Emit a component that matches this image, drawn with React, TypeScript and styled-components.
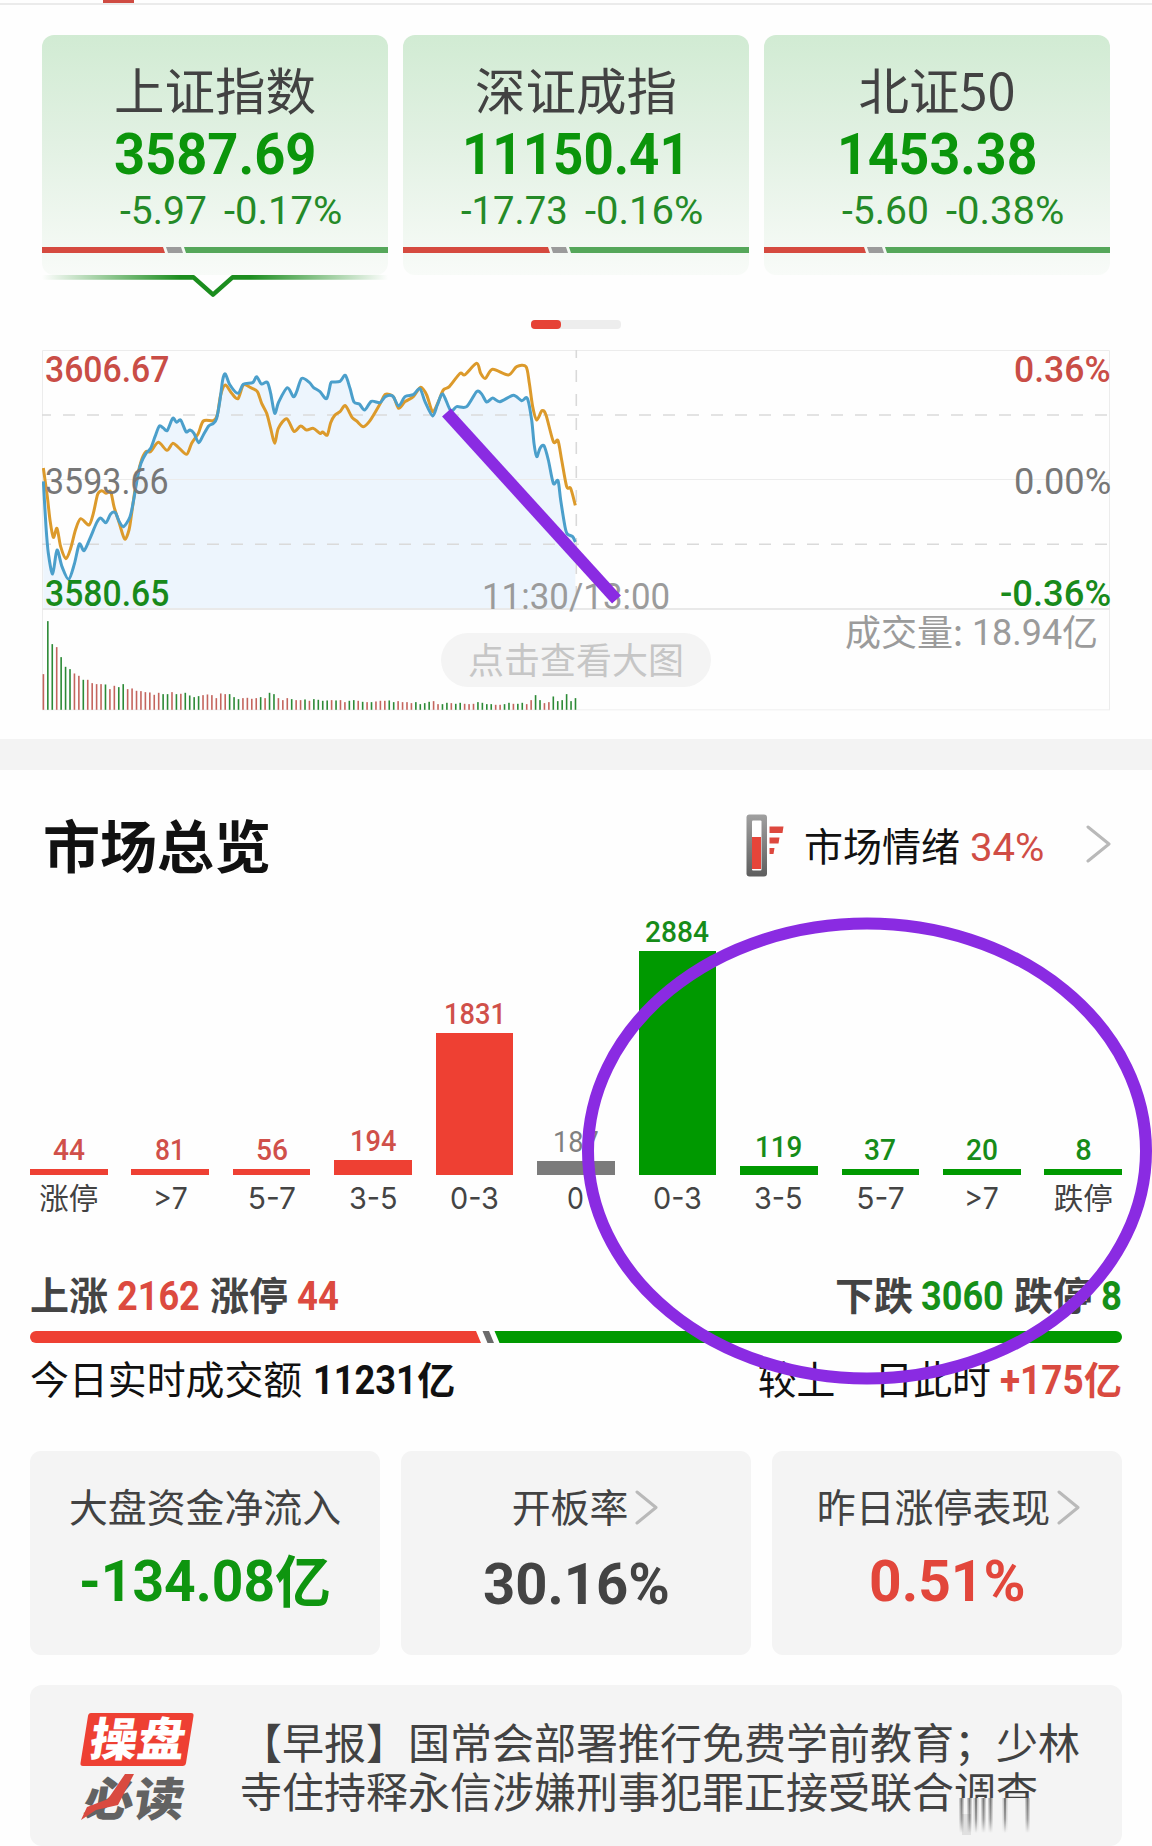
import React, { useLayoutEffect, useRef, useState } from 'react';
import styled, { createGlobalStyle } from 'styled-components';

const CJK = `"Noto Sans CJK SC", sans-serif`;
const DIGIT = `Roboto, "Noto Sans CJK SC", sans-serif`;
const RED = '#ee4033';
const GREEN = '#009900';
const PURPLE = '#8a2be2';

const Global = createGlobalStyle`
  * { box-sizing: border-box; }
  body { margin: 0; background: #fefefe; font-family: ${CJK}; }
`;

/* ---------- text ---------- */

const FitBox = styled.span<{ $w: number; $size: number; $color: string; $weight: number; $font: string }>`
  display: block;
  flex: none;
  width: ${(p) => p.$w}px;
  height: 1em;
  line-height: 1;
  white-space: nowrap;
  font-family: ${(p) => p.$font};
  font-size: ${(p) => p.$size}px;
  font-weight: ${(p) => p.$weight};
  color: ${(p) => p.$color};
`;
const FitInner = styled.span`
  display: inline-block;
  transform-origin: 0 50%;
`;

type FitProps = { w: number; size: number; color: string; weight?: number; font?: string; children: string };

/** Condenses or widens a run of digits to the given width. */
function Fit({ w, size, color, weight = 400, font = DIGIT, children }: FitProps) {
  const ref = useRef<HTMLSpanElement>(null);
  const [k, setK] = useState(1);
  useLayoutEffect(() => {
    if (ref.current && ref.current.offsetWidth) setK(w / ref.current.offsetWidth);
  }, [w, size, children]);
  return (
    <FitBox $w={w} $size={size} $color={color} $weight={weight} $font={font}>
      <FitInner ref={ref} style={{ transform: `scaleX(${k})` }}>{children}</FitInner>
    </FitBox>
  );
}

const Han = styled.span<{ $size: number; $color?: string; $weight?: number }>`
  display: block;
  flex: none;
  height: 1em;
  line-height: 0.89;
  white-space: nowrap;
  font-family: ${CJK};
  font-size: ${(p) => p.$size}px;
  font-weight: ${(p) => p.$weight ?? 400};
  color: ${(p) => p.$color ?? '#424242'};
`;

/* ---------- page ---------- */

const Page = styled.main`
  position: relative;
  width: 1152px;
  height: 1846px;
  overflow: hidden;
  background: #fefefe;
  display: flex;
  flex-direction: column;
`;
const TabStrip = styled.div`
  flex: none;
  height: 5px;
  border-bottom: 2px solid #ebebeb;
  padding-left: 103px;
`;
const TabMark = styled.div`
  width: 31px;
  height: 3px;
  background: #cf4b42;
`;

/* ---------- index cards ---------- */

const IndexRow = styled.section`
  flex: none;
  margin-top: 30px;
  padding: 0 42px;
  display: grid;
  grid-template-columns: repeat(3, 1fr);
  gap: 15px;
`;
const IndexCard = styled.article`
  height: 240px;
  border-radius: 12px;
  background: linear-gradient(#d1ebd3, #e2f1e3 45%, #f8fbf8);
  display: flex;
  flex-direction: column;
`;
const IndexName = styled.div`
  height: 56px;
  margin-top: 28px;
  display: flex;
  align-items: center;
  justify-content: center;
`;
const IndexValue = styled.div`
  height: 50px;
  margin-top: 10px;
  display: flex;
  align-items: center;
  justify-content: center;
`;
const IndexChange = styled.div<{ $left: number }>`
  height: 40px;
  margin-top: 12px;
  padding-left: ${(p) => p.$left}px;
  display: flex;
  align-items: center;
  gap: 17px;
`;
const MiniRatio = styled.div`
  height: 6px;
  margin-top: 16px;
  display: flex;
  gap: 1px;
`;
const MiniSeg = styled.div<{ $w?: number; $c: string; $l?: boolean; $r?: boolean }>`
  ${(p) => (p.$w ? `width: ${p.$w}px;` : 'flex: 1;')}
  background: ${(p) => p.$c};
  clip-path: polygon(
    0 0,
    calc(100% - ${(p) => (p.$r ? 2 : 0)}px) 0,
    100% 100%,
    ${(p) => (p.$l ? 2 : 0)}px 100%
  );
`;
const Pointer = styled.svg`
  display: block;
  flex: none;
  margin-left: 42px;
`;
const Pager = styled.div`
  flex: none;
  width: 90px;
  height: 9px;
  margin: 22px auto 0;
  border-radius: 4px;
  background: #ededed;
`;
const PagerDot = styled.div`
  width: 30px;
  height: 9px;
  border-radius: 4px;
  background: #e64236;
`;

const indexes = [
  { name: '上证指数', value: '3587.69', vw: 202, diff: '-5.97', dw: 87, pct: '-0.17%', left: 78, red: 123 },
  { name: '深证成指', value: '11150.41', vw: 228, diff: '-17.73', dw: 107, pct: '-0.16%', left: 58, red: 147 },
  { name: '北证50', value: '1453.38', vw: 200, diff: '-5.60', dw: 87, pct: '-0.38%', left: 78, red: 102 },
];

/* ---------- intraday chart ---------- */

const ChartBox = styled.section`
  position: relative;
  flex: none;
  width: 1068px;
  height: 361px;
  margin: 21px 0 0 42px;
`;
const AxisLabel = styled.div<{ $top: number; $side: 'left' | 'right' }>`
  position: absolute;
  top: ${(p) => p.$top}px;
  ${(p) => (p.$side === 'left' ? 'left: 3px;' : 'right: -1px;')}
`;
const TimeLabel = styled.div`
  position: absolute;
  left: 440px;
  top: 229px;
`;
const VolumeLabel = styled.div`
  position: absolute;
  right: 12px;
  top: 264px;
  height: 36px;
  display: flex;
  align-items: center;
`;
const ZoomPill = styled.button`
  position: absolute;
  left: 399px;
  top: 283px;
  width: 270px;
  height: 54px;
  padding: 0;
  border: 0;
  border-radius: 27px;
  background: #f4f4f4;
  display: flex;
  align-items: center;
  justify-content: center;
`;

const price = [40,424,48,560,55,640,68,702,81,630,96,680,116,718,133,672,148,612,162,632,180,595,200,548,212,534,228,548,242,522,256,518,268,545,281,560,300,530,311,480,322,415,333,370,348,340,362,325,375,290,388,258,400,264,412,271,428,235,440,247,452,240,468,275,480,270,492,280,506,308,520,285,536,258,550,250,560,235,570,180,578,120,586,102,600,135,624,160,640,133,668,128,680,110,694,132,712,127,722,160,734,220,746,186,772,143,790,170,800,155,815,115,838,127,850,142,870,155,890,176,902,130,908,126,930,124,946,106,960,145,972,186,988,192,1004,210,1024,184,1050,188,1066,170,1088,168,1106,198,1125,170,1150,164,1170,146,1185,185,1208,228,1222,195,1238,162,1262,212,1280,200,1310,200,1340,155,1355,162,1370,186,1388,174,1410,185,1450,166,1475,182,1492,175,1505,240,1512,310,1520,350,1530,325,1542,317,1555,360,1570,430,1584,422,1592,480,1605,560,1612,582,1628,590,1636,606];
const average = [40,384,52,470,60,540,70,592,81,565,92,620,108,656,122,625,137,568,152,536,177,555,190,520,203,463,215,452,228,460,242,455,252,500,268,550,284,597,297,570,305,520,318,430,333,365,348,335,362,335,385,307,411,331,428,310,445,322,470,343,485,310,505,280,520,243,550,242,562,225,572,165,586,135,605,160,624,176,640,135,662,143,682,155,695,190,710,220,722,265,734,310,745,265,770,236,792,274,812,258,830,270,850,265,870,280,878,276,892,285,902,248,915,225,930,215,946,197,966,232,980,243,1000,260,1020,242,1050,192,1066,163,1090,170,1106,205,1125,185,1150,170,1172,142,1190,165,1208,215,1225,185,1240,150,1258,140,1290,100,1305,104,1340,70,1352,100,1366,115,1388,88,1435,105,1460,80,1488,80,1498,130,1508,200,1520,240,1536,212,1548,225,1570,305,1584,302,1595,360,1610,440,1622,445,1636,496];

function smooth(v: number[]) {
  const p: [number, number][] = [];
  for (let i = 0; i < v.length; i += 2) p.push([v[i] / 3 - 12, v[i + 1] / 3 - 10]);
  let d = `M${p[0][0]} ${p[0][1]}`;
  for (let i = 0; i < p.length - 1; i++) {
    const a = p[i - 1] || p[i], b = p[i], c = p[i + 1], e = p[i + 2] || c;
    d += `C${b[0] + (c[0] - a[0]) / 7} ${b[1] + (c[1] - a[1]) / 7} ${c[0] - (e[0] - b[0]) / 7} ${c[1] - (e[1] - b[1]) / 7} ${c[0]} ${c[1]}`;
  }
  return d;
}

const volumeSize = [107,266,197,188,158,129,122,109,102,90,90,80,77,77,76,62,72,68,77,62,64,57,56,53,52,45,51,47,47,53,47,48,51,43,38,41,44,46,44,35,49,47,47,38,32,35,36,33,35,38,35,51,47,35,29,35,32,29,29,31,27,32,30,27,28,29,28,29,23,27,29,27,24,23,23,25,27,27,28,23,26,23,23,20,23,17,20,24,26,17,17,21,20,18,21,18,17,18,23,21,17,17,15,15,17,21,18,18,21,17,29,44,29,20,23,40,26,29,47,26,35];
const volumeSide = 'rggrgggrrgrrrrgrrggrrrrrrrrggrgrggggrrrrrrgggrrrrgrggrrrgrrgrggggrgrrggrgrgrrrggrrrrggggrrggrggrrrggggrrggrggrrggrrggg';

const pricePath = smooth(price);

function IntradayChart() {
  return (
    <ChartBox>
      <svg width="1068" height="361" viewBox="0 0 1068 361" fill="none">
        <path d={`${pricePath}V259H1.3Z`} fill="#edf5fd" />
        <path d="M.5 360V.5H1067.5V360M0 129.5H1068" stroke="#ececec" />
        <path d="M0 359.8H1068" stroke="#efefef" />
        <path d="M0 259H1068" stroke="#e9e9e9" strokeWidth="2" />
        <path d="M-3 65H1065M-3 194.3H1065" stroke="#dadada" strokeWidth="1.6" strokeDasharray="12 12" />
        <path d="M534.3 -4V259" stroke="#d9d9d9" strokeWidth="1.6" strokeDasharray="12 12" />
        <path d={smooth(average)} stroke="#dc9a2b" strokeWidth="3" strokeLinejoin="round" />
        <path d={pricePath} stroke="#4b9fcb" strokeWidth="3" strokeLinejoin="round" />
        {volumeSize.map((h, i) => (
          <rect
            key={i}
            x={0.6 + i * 4.434}
            y={359.8 - h / 3}
            width="1.6"
            height={h / 3}
            fill={volumeSide[i] === 'r' ? '#c4655e' : '#2c8a36'}
          />
        ))}
      </svg>
      <AxisLabel $top={1} $side="left"><Fit w={124} size={37} weight={500} color="#c94d46">3606.67</Fit></AxisLabel>
      <AxisLabel $top={113} $side="left"><Fit w={124} size={37} color="#777">3593.66</Fit></AxisLabel>
      <AxisLabel $top={225} $side="left"><Fit w={124} size={37} weight={500} color="#188a1b">3580.65</Fit></AxisLabel>
      <AxisLabel $top={1} $side="right"><Fit w={97} size={37} weight={500} color="#c94d46">0.36%</Fit></AxisLabel>
      <AxisLabel $top={113} $side="right"><Fit w={97} size={37} color="#777">0.00%</Fit></AxisLabel>
      <AxisLabel $top={225} $side="right"><Fit w={111} size={37} weight={500} color="#188a1b">-0.36%</Fit></AxisLabel>
      <TimeLabel><Fit w={188} size={36} color="#9b9b9b">11:30/13:00</Fit></TimeLabel>
      <VolumeLabel>
        <Han $size={36} $color="#9b9b9b">成交量:</Han>
        <Fit w={99} size={37} color="#9b9b9b">&nbsp;18.94</Fit>
        <Han $size={36} $color="#9b9b9b">亿</Han>
      </VolumeLabel>
      <ZoomPill><Han $size={36} $color="#c6c6c6">点击查看大图</Han></ZoomPill>
    </ChartBox>
  );
}

/* ---------- overview ---------- */

const Band = styled.div`
  flex: none;
  height: 31px;
  margin-top: 28px;
  background: #f3f3f3;
`;
const OverviewHead = styled.header`
  flex: none;
  height: 64px;
  margin-top: 44px;
  padding: 0 41px 0 43px;
  display: flex;
  align-items: center;
`;
const Mood = styled.div`
  margin-left: auto;
  display: flex;
  align-items: center;
`;
const Thermo = styled.svg`
  display: block;
  margin: 0 20px 2px 0;
`;
const MoodPct = styled.div`
  margin: 4px 42px 0 10px;
`;
const MoodArrow = styled.div`
  height: 42px;
`;

const Histogram = styled.section`
  flex: none;
  height: 298px;
  margin-top: 35px;
  padding: 0 30px;
  display: grid;
  grid-template-columns: repeat(11, 77.6px);
  justify-content: space-between;
`;
const Column = styled.div`
  display: flex;
  flex-direction: column;
  justify-content: flex-end;
  align-items: center;
`;
const Bar = styled.div<{ $c: string }>`
  width: 100%;
  margin-top: 4px;
  background: ${(p) => p.$c};
`;
const BarLabel = styled.div`
  height: 36px;
  padding-top: 8px;
`;

const columns = [
  { n: '44', h: 6, w: 32, t: '涨停', tw: 0, c: 'r' },
  { n: '81', h: 6, w: 30, t: '>7', tw: 35, c: 'r' },
  { n: '56', h: 6, w: 32, t: '5-7', tw: 48, c: 'r' },
  { n: '194', h: 15, w: 46, t: '3-5', tw: 49, c: 'r' },
  { n: '1831', h: 142, w: 62, t: '0-3', tw: 49, c: 'r' },
  { n: '187', h: 14, w: 46, t: '0', tw: 17, c: 'n' },
  { n: '2884', h: 224, w: 64, t: '0-3', tw: 49, c: 'g' },
  { n: '119', h: 9, w: 47, t: '3-5', tw: 49, c: 'g' },
  { n: '37', h: 6, w: 32, t: '5-7', tw: 48, c: 'g' },
  { n: '20', h: 6, w: 32, t: '>7', tw: 35, c: 'g' },
  { n: '8', h: 6, w: 16, t: '跌停', tw: 0, c: 'g' },
];
const barFill: Record<string, string> = { r: RED, n: '#7b7b7b', g: GREEN };
const barText: Record<string, string> = { r: '#d0504a', n: '#808080', g: '#178c19' };

const Line = styled.div<{ $top: number }>`
  flex: none;
  height: 40px;
  margin-top: ${(p) => p.$top}px;
  padding: 0 30px;
  display: flex;
  align-items: center;
  justify-content: space-between;
`;
const Group = styled.div`
  display: flex;
  align-items: center;
  ${Han} {
    margin-top: -3px;
  }
`;
const Gap = styled.i<{ $w: number }>`
  width: ${(p) => p.$w}px;
`;
const RatioBar = styled.svg`
  display: block;
  flex: none;
  margin: 14px 0 0 30px;
`;

/* ---------- metric cards ---------- */

const Metrics = styled.section`
  flex: none;
  margin-top: 50px;
  padding: 0 30px;
  display: grid;
  grid-template-columns: repeat(3, 1fr);
  gap: 21px;
`;
const Metric = styled.article`
  height: 204px;
  padding-top: 36px;
  border-radius: 11px;
  background: #f4f4f4;
  display: flex;
  flex-direction: column;
  align-items: center;
`;
const MetricName = styled.div<{ $shift?: number }>`
  height: 40px;
  margin-left: ${(p) => p.$shift ?? 0}px;
  display: flex;
  align-items: center;
  gap: 7px;
`;
const MetricValue = styled.div<{ $top: number }>`
  height: 60px;
  margin-top: ${(p) => p.$top}px;
  display: flex;
  align-items: center;
`;

const Chevron = ({ w, h }: { w: number; h: number }) => (
  <svg width={w} height={h} viewBox={`0 0 ${w} ${h}`} fill="none">
    <path d={`M2 2L${w - 2} ${h / 2}L2 ${h - 2}`} stroke="#b9b9b9" strokeWidth="3" strokeLinecap="round" strokeLinejoin="round" />
  </svg>
);

/* ---------- news ---------- */

const News = styled.section`
  flex: none;
  position: relative;
  height: 161px;
  margin: 30px 30px 0;
  padding: 28px 0 0 50px;
  border-radius: 12px;
  background: #f4f4f4;
  display: flex;
`;
const Logo = styled.svg`
  flex: none;
  overflow: visible;
`;
const Headline = styled.p`
  width: 850px;
  margin: 3px 0 0 44px;
  font: 400 42px/49px ${CJK};
  color: #424242;
  white-space: nowrap;
`;
const Smear = styled.svg`
  position: absolute;
  left: 914px;
  top: 113px;
`;
const Marks = styled.svg`
  position: absolute;
  left: 0;
  top: 0;
  pointer-events: none;
`;

const drips = [17.5, 25.5, 32, 39.5, 46.5, 61, 83.5];

export default function App() {
  return (
    <Page>
      <Global />
      <TabStrip><TabMark /></TabStrip>

      <IndexRow>
        {indexes.map((x) => (
          <IndexCard key={x.name}>
            <IndexName><Han $size={50.5}>{x.name}</Han></IndexName>
            <IndexValue><Fit w={x.vw} size={58} weight={700} color="#0b950b">{x.value}</Fit></IndexValue>
            <IndexChange $left={x.left}>
              <Fit w={x.dw} size={39} color="#248a27">{x.diff}</Fit>
              <Fit w={118} size={39} color="#248a27">{x.pct}</Fit>
            </IndexChange>
            <MiniRatio>
              <MiniSeg $w={x.red} $c="#d54a3f" $r />
              <MiniSeg $w={17} $c="#9b9b9b" $l $r />
              <MiniSeg $c="#55a75a" $l />
            </MiniRatio>
          </IndexCard>
        ))}
      </IndexRow>
      <Pointer width="346" height="23" viewBox="0 0 346 23" fill="none">
        <defs>
          <linearGradient id="fade" gradientUnits="userSpaceOnUse" x1="0" y1="0" x2="346" y2="0">
            <stop offset="0" stopColor="#1b8d1e" stopOpacity="0" />
            <stop offset=".4" stopColor="#1b8d1e" />
            <stop offset=".6" stopColor="#1b8d1e" />
            <stop offset="1" stopColor="#1b8d1e" stopOpacity="0" />
          </linearGradient>
        </defs>
        <path d="M0 2.4H151.5L171 19.6L190.5 2.4H346" stroke="url(#fade)" strokeWidth="4.6" strokeLinejoin="round" />
      </Pointer>
      <Pager><PagerDot /></Pager>

      <IntradayChart />
      <Band />

      <OverviewHead>
        <Han $size={57} $weight={700} $color="#111">市场总览</Han>
        <Mood>
          <Thermo width="38" height="63" viewBox="0 0 38 63">
            <defs>
              <linearGradient id="tube" x1="0" y1="0" x2="0" y2="1">
                <stop offset="0" stopColor="#a0a0a0" />
                <stop offset="1" stopColor="#5e5e5e" />
              </linearGradient>
            </defs>
            <rect x="0.5" y="0.5" width="20.5" height="62" rx="3" fill="url(#tube)" />
            <rect x="6" y="6.5" width="9.5" height="50" rx="1" fill="#fff" />
            <rect x="6" y="23" width="9" height="32" fill="#e6453a" />
            <path d="M23.5 12.5H37.5L36.5 19H23.5ZM23.5 23.5H33.5L32.5 29.5H23.5ZM23.5 34H28.5L27.5 40H23.5Z" fill="#dd483e" />
          </Thermo>
          <Han $size={39} $color="#111">市场情绪</Han>
          <MoodPct><Fit w={74} size={39} color="#d04d45">34%</Fit></MoodPct>
          <MoodArrow><Chevron w={25} h={38} /></MoodArrow>
        </Mood>
      </OverviewHead>

      <Histogram>
        {columns.map((c, i) => (
          <Column key={i}>
            <Fit w={c.w} size={29} weight={c.c === 'n' ? 400 : 500} color={barText[c.c]}>{c.n}</Fit>
            <Bar $c={barFill[c.c]} style={{ height: c.h }} />
            <BarLabel>
              {c.tw ? <Fit w={c.tw} size={30} font="Inter, sans-serif" color="#444">{c.t}</Fit> : <Han $size={29.5}>{c.t}</Han>}
            </BarLabel>
          </Column>
        ))}
      </Histogram>

      <Line $top={66}>
        <Group>
          <Han $size={39} $weight={700} $color="#444">上涨</Han><Gap $w={9} />
          <Fit w={83} size={40} weight={700} color="#dc4a3f">2162</Fit><Gap $w={10} />
          <Han $size={39} $weight={700} $color="#444">涨停</Han><Gap $w={9} />
          <Fit w={42} size={40} weight={700} color="#dc4a3f">44</Fit>
        </Group>
        <Group>
          <Han $size={39} $weight={700} $color="#444">下跌</Han><Gap $w={8} />
          <Fit w={83} size={40} weight={700} color="#169018">3060</Fit><Gap $w={10} />
          <Han $size={39} $weight={700} $color="#444">跌停</Han><Gap $w={9} />
          <Fit w={21} size={40} weight={700} color="#169018">8</Fit>
        </Group>
      </Line>
      <RatioBar width="1092" height="12" viewBox="0 0 1092 12">
        <path d="M6 0H446L451 12H6A6 6 0 0 1 6 0Z" fill={RED} />
        <path d="M452.500 0H459L464 12H457.500Z" fill="#6a6a6a" />
        <path d="M464.500 0H1086A6 6 0 0 1 1086 12H469.500Z" fill={GREEN} />
      </RatioBar>
      <Line $top={18}>
        <Group>
          <Han $size={38.9} $color="#111">今日实时成交额</Han><Gap $w={11} />
          <Fit w={104} size={40} weight={700} color="#111">11231</Fit>
          <Han $size={38} $weight={700} $color="#111">亿</Han>
        </Group>
        <Group>
          <Han $size={38.9} $color="#111">较上一日此时</Han><Gap $w={9} />
          <Fit w={84} size={40} weight={700} color="#d94a40">+175</Fit>
          <Han $size={38} $weight={700} $color="#d94a40">亿</Han>
        </Group>
      </Line>

      <Metrics>
        <Metric>
          <MetricName><Han $size={38.9}>大盘资金净流入</Han></MetricName>
          <MetricValue $top={24}>
            <Fit w={196} size={58} weight={700} color="#0e950f">-134.08</Fit>
            <Han $size={56} $weight={700} $color="#0e950f">亿</Han>
          </MetricValue>
        </Metric>
        <Metric>
          <MetricName $shift={18}><Han $size={38.9}>开板率</Han><Chevron w={23} h={35} /></MetricName>
          <MetricValue $top={27}><Fit w={187} size={58} weight={700} color="#434343">30.16%</Fit></MetricValue>
        </Metric>
        <Metric>
          <MetricName $shift={3}><Han $size={38.9}>昨日涨停表现</Han><Chevron w={23} h={35} /></MetricName>
          <MetricValue $top={24}><Fit w={157} size={58} weight={700} color="#e2463b">0.51%</Fit></MetricValue>
        </Metric>
      </Metrics>

      <News>
        <Logo width="116" height="108" viewBox="0 0 116 108">
          <path d="M11 0H111Q114 0 113.500 3L106 50Q105.500 53 102.500 53H3Q0 53 .5 50L8 3Q8.500 0 11 0Z" fill={RED} />
          <g fontFamily="Noto Sans CJK SC" fontWeight="900" fontSize="46">
            <text transform="translate(8 43) skewX(-9)" fill="#fff" textLength="95" lengthAdjust="spacingAndGlyphs">操盘</text>
            <text transform="translate(2 103) skewX(-9)" fill="#626262" textLength="100" lengthAdjust="spacingAndGlyphs">必读</text>
          </g>
          <path d="M1 107L7 94L28 86L45 61L54 61L38 92L16 97Z" fill="#d94a40" />
        </Logo>
        <Headline>
          【早报】国常会部署推行免费学前教育；少林<br />
          寺住持释永信涉嫌刑事犯罪正接受联合调查
        </Headline>
        <Smear width="190" height="40" viewBox="0 0 190 40">
          <defs>
            <linearGradient id="drip" x1="0" y1="0" x2="0" y2="1">
              <stop offset="0" stopColor="#555" stopOpacity=".8" />
              <stop offset=".6" stopColor="#555" stopOpacity=".5" />
              <stop offset="1" stopColor="#555" stopOpacity="0" />
            </linearGradient>
          </defs>
          <rect x="10" width="94" height="18" fill="#f4f4f4" />
          <rect x="18" y="16" width="9" height="21" fill="#d2d2d2" opacity=".6" />
          {drips.map((x) => (
            <g key={x} fill="url(#drip)">
              <rect x={x - 2.5} width="5" height="35" opacity=".35" />
              <rect x={x - 1} width="2" height="35" opacity=".9" />
            </g>
          ))}
        </Smear>
      </News>

      <Marks width="1152" height="1846" viewBox="0 0 1152 1846" fill="none" stroke={PURPLE} strokeWidth="12">
        <path d="M446.500 412.500L616.500 599.500" />
        <ellipse cx="867" cy="1151" rx="279" ry="227.500" />
      </Marks>
    </Page>
  );
}
